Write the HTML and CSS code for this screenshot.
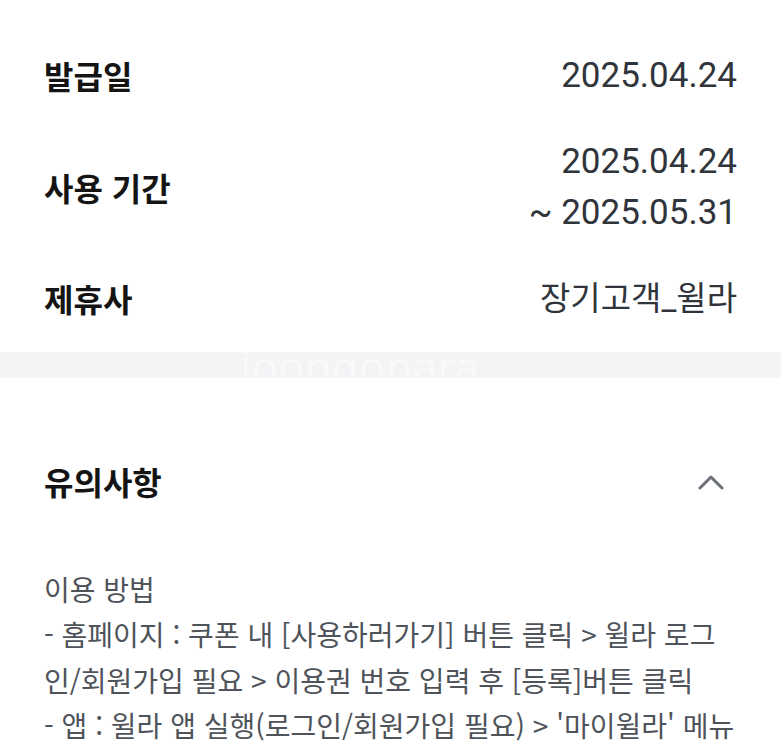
FILE: index.html
```html
<!DOCTYPE html>
<html lang="ko">
<head>
<meta charset="utf-8">
<title>쿠폰 상세</title>
<link rel="stylesheet" href="styles.css">
</head>
<body>
  <section class="info">
    <div class="row">
      <div class="label">발급일</div>
      <div class="value"><span class="date">2025.04.24</span></div>
    </div>
    <div class="row">
      <div class="label">사용 기간</div>
      <div class="value">
        <span class="date">2025.04.24</span>
        <span class="date">~ 2025.05.31</span>
      </div>
    </div>
    <div class="row">
      <div class="label">제휴사</div>
      <div class="value">장기고객_윌라</div>
    </div>
  </section>

  <div class="divider">
    <span class="watermark">joongonara</span>
  </div>

  <section class="notice">
    <div class="notice-head">
      <h2 class="notice-title">유의사항</h2>
      <svg class="chevron" width="26" height="16" viewBox="0 0 26 16" aria-hidden="true">
        <path d="M2 14 L13 3 L24 14" fill="none" stroke="#6b7079" stroke-width="3" stroke-linecap="round" stroke-linejoin="round"/>
      </svg>
    </div>
    <div class="notice-body">
      <p class="notice-sub">이용 방법</p>
      <p class="notice-text">- 홈페이지 : 쿠폰 내 [사용하러가기] 버튼 클릭 &gt; 윌라 로그인/회원가입 필요 &gt; 이용권 번호 입력 후 [등록]버튼 클릭</p>
      <p class="notice-text">- 앱 : 윌라 앱 실행(로그인/회원가입 필요) &gt; '마이윌라' 메뉴</p>
    </div>
  </section>
</body>
</html>
```

FILE: styles.css
```css
* {
  box-sizing: border-box;
}

body {
  margin: 0;
  background: #ffffff;
  font-family: "Noto Sans CJK KR", "Noto Sans", sans-serif;
  color: #111111;
}

/* coupon info rows */
.info {
  padding: 50px 44px 28px;
  display: flex;
  flex-direction: column;
  gap: 35px;
}

.row {
  display: flex;
  justify-content: space-between;
  align-items: center;
}

.label {
  font-size: 32px;
  font-weight: 700;
  line-height: 51px;
  color: #141414;
}

.value {
  display: flex;
  flex-direction: column;
  align-items: flex-end;
  font-family: Roboto, "Noto Sans CJK KR", sans-serif;
  font-size: 33px;
  line-height: 51px;
  color: #30343b;
}

.date {
  font-size: 35px;
}

/* grey band between sections */
.divider {
  position: relative;
  height: 26px;
  background: #f3f4f6;
}

.watermark {
  position: absolute;
  left: 240px;
  top: -8px;
  font-family: "Noto Sans", sans-serif;
  font-size: 44px;
  line-height: 44px;
  color: #ffffff;
  opacity: 0.5;
  pointer-events: none;
}

/* notice accordion */
.notice {
  padding: 78px 44px 0;
}

.notice-head {
  display: flex;
  justify-content: space-between;
  align-items: center;
  height: 51px;
}

.notice-title {
  margin: 0;
  font-size: 32px;
  font-weight: 700;
  line-height: 51px;
  color: #141414;
}

.chevron {
  margin-right: 13px;
}

.notice-body {
  margin-top: 60px;
  font-size: 28px;
  line-height: 45.4px;
  color: #4f535a;
}

.notice-body p {
  margin: 0;
}
```
